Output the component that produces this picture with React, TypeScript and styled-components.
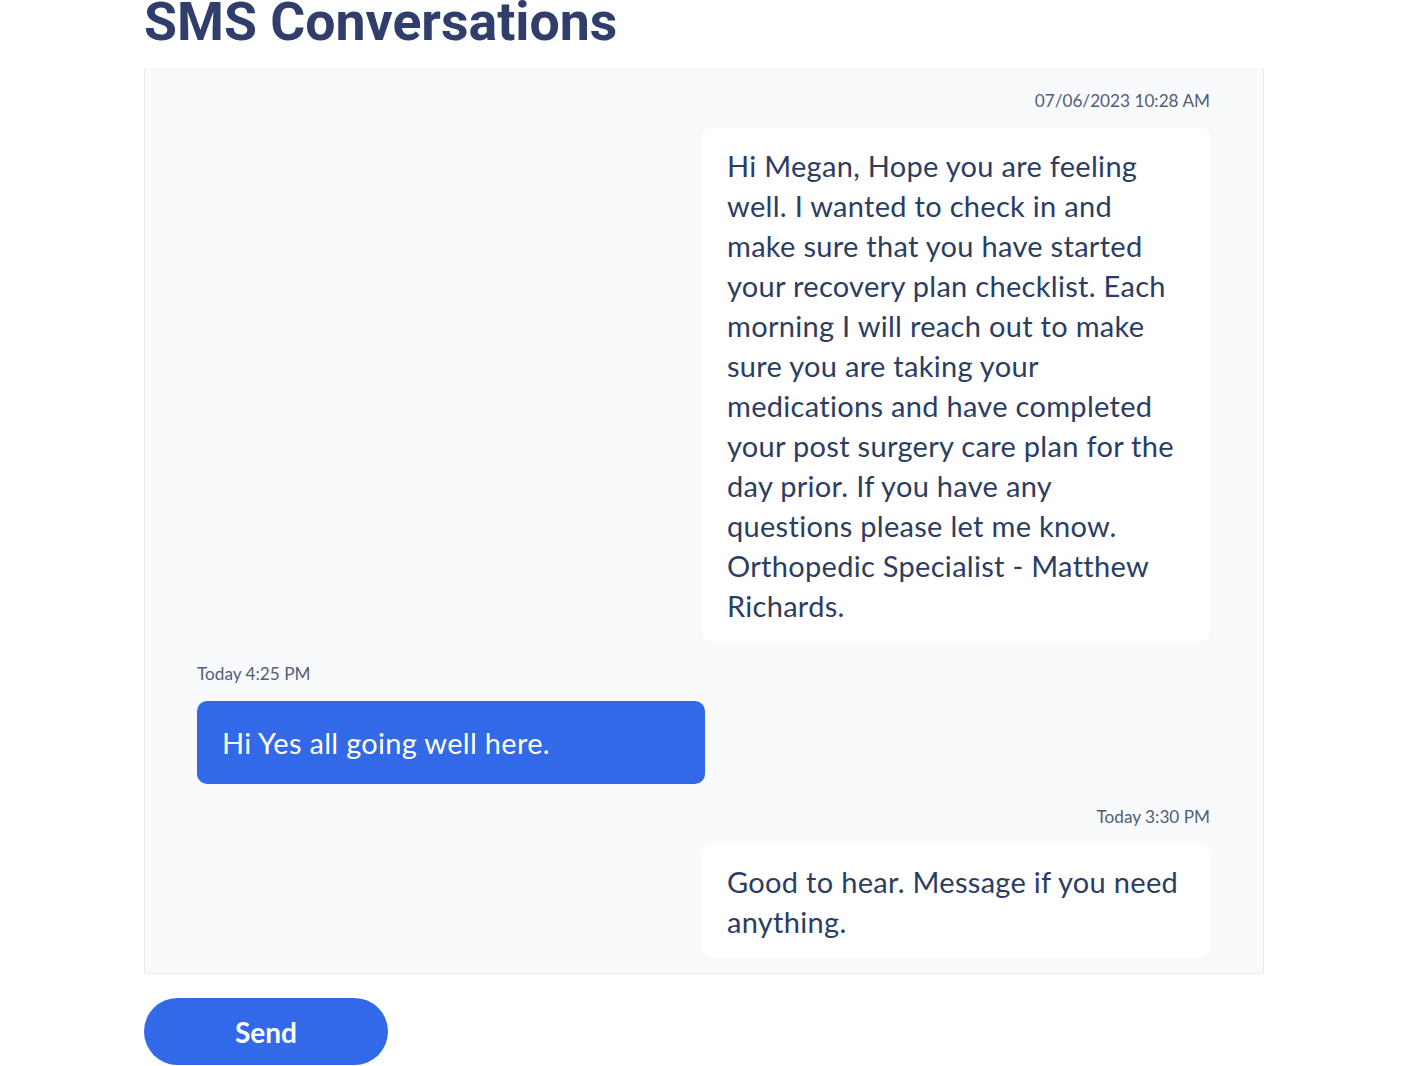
import React from "react";
import styled, { createGlobalStyle } from "styled-components";

const GlobalStyle = createGlobalStyle`
  html, body {
    margin: 0;
    padding: 0;
    background: #ffffff;
  }
  body {
    font-family: Lato, "Noto Sans", "Liberation Sans", sans-serif;
  }
`;

const Page = styled.div`
  padding: 0 144px;
  width: 1120px;
`;

const Title = styled.h1`
  margin: 0 0 25px 0;
  font-family: Roboto, "Liberation Sans", sans-serif;
  font-weight: 700;
  font-size: 53.6px;
  line-height: 44px;
  color: #2f3e6a;
`;

const Thread = styled.div`
  display: flex;
  flex-direction: column;
  gap: 22px;
  background: #f8fafc;
  border: 1px solid #e4e7ec;
  border-top-color: #f1f3f6;
  border-radius: 0 0 4px 4px;
  padding: 20px 53px 16px 52px;
`;

const Group = styled.div<{ $side: "left" | "right" }>`
  display: flex;
  flex-direction: column;
  gap: 16px;
  align-items: ${(p) => (p.$side === "right" ? "flex-end" : "flex-start")};
`;

const Stamp = styled.div`
  font-size: 17.2px;
  line-height: 22px;
  color: #535c7a;
`;

const Bubble = styled.div<{ $variant: "incoming" | "outgoing" }>`
  box-sizing: border-box;
  width: 508px;
  border-radius: 10px;
  font-size: 29px;
  letter-spacing: 0.3px;
  line-height: 40px;
  padding: ${(p) => (p.$variant === "outgoing" ? "22px 28px 21px 25px" : "18px 28px 15px 25px")};
  background: ${(p) => (p.$variant === "outgoing" ? "#3169e8" : "#ffffff")};
  color: ${(p) => (p.$variant === "outgoing" ? "#ffffff" : "#2c3d63")};
`;

const SendButton = styled.button`
  margin-top: 24px;
  width: 244px;
  height: 67px;
  border: none;
  border-radius: 34px;
  background: #3169e8;
  color: #ffffff;
  font-family: Lato, "Noto Sans", sans-serif;
  font-weight: 700;
  font-size: 28px;
  cursor: pointer;
`;

type Msg = {
  side: "left" | "right";
  stamp: string;
  text: string;
};

const messages: Msg[] = [
  {
    side: "right",
    stamp: "07/06/2023 10:28 AM",
    text:
      "Hi Megan, Hope you are feeling well. I wanted to check in and make sure that you have started your recovery plan checklist. Each morning I will reach out to make sure you are taking your medications and have completed your post surgery care plan for the day prior. If you have any questions please let me know. Orthopedic Specialist - Matthew Richards.",
  },
  { side: "left", stamp: "Today 4:25 PM", text: "Hi Yes all going well here." },
  {
    side: "right",
    stamp: "Today 3:30 PM",
    text: "Good to hear. Message if you need anything.",
  },
];

export default function App() {
  return (
    <Page>
      <GlobalStyle />
      <Title>SMS Conversations</Title>
      <Thread>
        {messages.map((m, i) => (
          <Group key={i} $side={m.side}>
            <Stamp>{m.stamp}</Stamp>
            <Bubble $variant={m.side === "left" ? "outgoing" : "incoming"}>{m.text}</Bubble>
          </Group>
        ))}
      </Thread>
      <SendButton>Send</SendButton>
    </Page>
  );
}
